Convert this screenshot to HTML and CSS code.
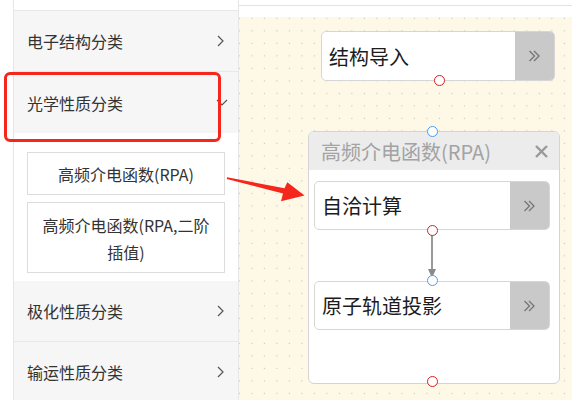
FILE: index.html
```html
<!DOCTYPE html>
<html lang="zh-CN">
<head>
<meta charset="utf-8">
<title>Workflow</title>
<link rel="stylesheet" href="styles.css">
</head>
<body>
<div class="app">
  <aside class="sidebar">
    <ul class="menu">
      <li class="menu-item"><span>电子结构分类</span>
        <svg class="chev-right" width="7" height="12" viewBox="0 0 7 12"><polyline points="1,1 6,6 1,11" /></svg>
      </li>
      <li class="menu-item open"><span>光学性质分类</span>
        <svg class="chev-down" width="12" height="7" viewBox="0 0 12 7"><polyline points="1,1 6,6 11,1" /></svg>
      </li>
      <li class="submenu">
        <div class="sub-item">高频介电函数(RPA)</div>
        <div class="sub-item multi">高频介电函数(RPA,二阶插值)</div>
      </li>
      <li class="menu-item"><span>极化性质分类</span>
        <svg class="chev-right" width="7" height="12" viewBox="0 0 7 12"><polyline points="1,1 6,6 1,11" /></svg>
      </li>
      <li class="menu-item last"><span>输运性质分类</span>
        <svg class="chev-right" width="7" height="12" viewBox="0 0 7 12"><polyline points="1,1 6,6 1,11" /></svg>
      </li>
    </ul>
  </aside>

  <main class="main">
    <div class="topbar"><div class="topbar-line"></div></div>
    <div class="canvas">
      <div class="node node-import">
        <div class="node-label">结构导入</div>
        <div class="node-btn">
          <svg width="13" height="12" viewBox="0 0 13 12"><polyline points="1.5,1 6.5,6 1.5,11" /><polyline points="6,1 11,6 6,11" /></svg>
        </div>
      </div>

      <div class="group">
        <div class="group-head">
          <span class="group-title">高频介电函数(RPA)</span>
          <svg class="group-close" width="13" height="13" viewBox="0 0 13 13"><line x1="1" y1="1" x2="12" y2="12" /><line x1="12" y1="1" x2="1" y2="12" /></svg>
        </div>
        <div class="group-body">
          <div class="node inner">
            <div class="node-label">自洽计算</div>
            <div class="node-btn">
              <svg width="13" height="12" viewBox="0 0 13 12"><polyline points="1.5,1 6.5,6 1.5,11" /><polyline points="6,1 11,6 6,11" /></svg>
            </div>
          </div>
          <div class="node inner">
            <div class="node-label">原子轨道投影</div>
            <div class="node-btn">
              <svg width="13" height="12" viewBox="0 0 13 12"><polyline points="1.5,1 6.5,6 1.5,11" /><polyline points="6,1 11,6 6,11" /></svg>
            </div>
          </div>
        </div>
      </div>

      <svg class="edge" width="12" height="50" viewBox="0 0 12 50">
        <line x1="6" y1="2" x2="6" y2="41" />
        <polygon points="2,38 10,38 6,47" />
      </svg>

      <span class="port out port-import"></span>
      <span class="port in port-group-in"></span>
      <span class="port out port-scf"></span>
      <span class="port in port-pdos"></span>
      <span class="port out port-group-out"></span>
    </div>
  </main>

  <div class="highlight"></div>
  <svg class="pointer" width="572" height="400" viewBox="0 0 572 400">
    <polygon points="227,177.2 284.5,188.3 287.3,182.3 304.5,195.6 281,201.2 283,193.6 226.8,178.9" />
  </svg>
</div>
</body>
</html>
```

FILE: styles.css
```css
* { box-sizing: border-box; }

html, body {
  margin: 0;
  padding: 0;
  background: #fff;
}

body {
  font-family: "Noto Sans CJK SC", "Liberation Sans", sans-serif;
  color: #333;
}

.app {
  position: relative;
  display: flex;
  width: 572px;
  height: 400px;
  overflow: hidden;
}

/* ---------- sidebar ---------- */
.sidebar {
  width: 226px;
  margin-left: 13px;
  border-left: 1px solid #e6e6e6;
  border-right: 1px solid #e6e6e6;
  padding-top: 10px;
  background: #fff;
  flex-shrink: 0;
}

.menu {
  list-style: none;
  margin: 0;
  padding: 0;
  border-top: 1px solid #e8e8e8;
}

.menu-item {
  display: flex;
  align-items: center;
  justify-content: space-between;
  height: 61px;
  padding: 0 14px 0 13px;
  background: #f6f6f6;
  border-bottom: 1px solid #e8e8e8;
  font-size: 16px;
  line-height: 20px;
  color: #333;
}

.menu-item.open {
  height: 61px;
  border-bottom: none;
}

.chev-right polyline,
.chev-down polyline {
  fill: none;
  stroke: #555;
  stroke-width: 1.2;
}

.chev-down { margin-right: -4px; }

.submenu {
  display: flex;
  flex-direction: column;
  gap: 7px;
  padding: 19px 13px 8px 13px;
  background: #fff;
}

.sub-item {
  height: 43px;
  border: 1px solid #dcdcdc;
  background: #fff;
  text-align: center;
  font-size: 16px;
  line-height: 43px;
  color: #333;
}

.sub-item.multi {
  height: 71px;
  line-height: 27px;
  padding: 9px 10px 6px;
}

/* ---------- main / canvas ---------- */
.main {
  flex: 1;
  display: flex;
  flex-direction: column;
}

.topbar {
  height: 17px;
  background: #fff;
}

.topbar-line {
  height: 6px;
  border-bottom: 1px solid #e3e3e3;
}

.canvas {
  position: relative;
  flex: 1;
  background-color: #fef9e7;
  background-image: radial-gradient(circle, #c4c2bb 0.6px, rgba(0, 0, 0, 0) 1px);
  background-size: 12.5px 12.5px;
  background-position: -5.9px -4.9px;
}

.node {
  display: flex;
  border: 1px solid #d6d6d6;
  border-radius: 5px;
  background: #fff;
  overflow: hidden;
}

.node-import {
  position: absolute;
  left: 82px;
  top: 14px;
  width: 234px;
  height: 50px;
}

.node-label {
  flex: 1;
  padding-left: 7px;
  display: flex;
  align-items: center;
  font-size: 20px;
  color: #1c1c1c;
  white-space: nowrap;
}

.node-btn {
  width: 39px;
  background: #c9c9c9;
  display: flex;
  align-items: center;
  justify-content: center;
}

.node-btn polyline {
  fill: none;
  stroke: #757575;
  stroke-width: 1.3;
}

.group {
  position: absolute;
  left: 69px;
  top: 114px;
  width: 252px;
  height: 253px;
  border: 1px solid #d4d4d4;
  border-radius: 6px;
  background: #fff;
  overflow: hidden;
}

.group-head {
  height: 38px;
  background: #ececec;
  display: flex;
  align-items: center;
  justify-content: space-between;
  padding: 0 11px 0 12px;
}

.group-title {
  font-size: 20px;
  color: #a3a3a3;
  white-space: nowrap;
}

.group-close line {
  stroke: #9a9a9a;
  stroke-width: 2.4;
}

.group-body {
  display: flex;
  flex-direction: column;
  gap: 51px;
  padding: 11px 0 0 5px;
}

.node.inner {
  width: 236px;
  height: 49px;
}

.edge {
  position: absolute;
  left: 187px;
  top: 214px;
}

.edge line {
  stroke: #8f8f8f;
  stroke-width: 1.8;
}

.edge polygon {
  fill: #8a8a8a;
}

.port {
  position: absolute;
  width: 11px;
  height: 11px;
  margin: -5.5px 0 0 -5.5px;
  border-radius: 50%;
  background: #fff;
  border: 1.5px solid;
}

.port.out { border-color: #d42020; }
.port.in { border-color: #4a9cf0; }

.port-import { left: 200px; top: 63.5px; }
.port-group-in { left: 193.7px; top: 114px; }
.port-scf { left: 193.7px; top: 213px; }
.port-pdos { left: 193.7px; top: 263.7px; }
.port-group-out { left: 193.7px; top: 364.5px; }

/* ---------- annotations ---------- */
.highlight {
  position: absolute;
  left: 4px;
  top: 72px;
  width: 217px;
  height: 70px;
  border: 3px solid #f5261b;
  border-radius: 6px;
  pointer-events: none;
}

.pointer {
  position: absolute;
  left: 0;
  top: 0;
  pointer-events: none;
}

.pointer polygon {
  fill: #f5261b;
}
```
